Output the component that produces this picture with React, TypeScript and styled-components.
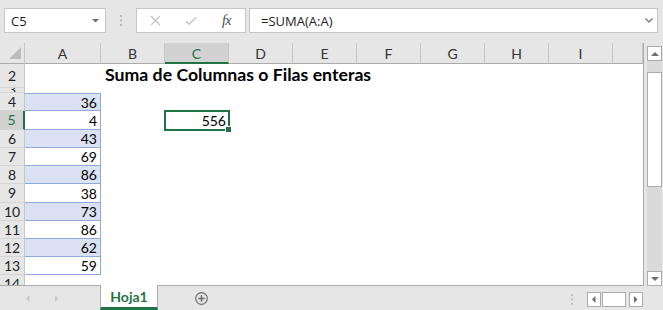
import React from 'react';
import styled, { createGlobalStyle } from 'styled-components';

const GREEN = '#217346';
const UI_FONT = `"Open Sans", "Noto Sans", sans-serif`;
const CELL_FONT = `Lato, "Liberation Sans", sans-serif`;

const GlobalStyle = createGlobalStyle`
  html, body {
    margin: 0;
    padding: 0;
    background: #e6e6e6;
  }
  body {
    width: 663px;
    height: 310px;
    overflow: hidden;
  }
`;

const Window = styled.div`
  width: 663px;
  height: 310px;
  display: flex;
  flex-direction: column;
  background: #e6e6e6;
  overflow: hidden;
`;

/* ---------- formula bar ---------- */

const Toolbar = styled.div`
  height: 43px;
  box-sizing: border-box;
  padding: 8px 5px 10px 4px;
  display: flex;
  align-items: stretch;
`;

const Box = styled.div`
  background: #fff;
  border: 1px solid #c6c6c6;
  box-sizing: border-box;
  display: flex;
  align-items: center;
`;

const NameBox = styled(Box)`
  width: 102px;
  padding: 0 6px 0 6px;
  justify-content: space-between;
  font: 13px ${UI_FONT};
  color: #222;
`;

const Splitter = styled.div`
  width: 30px;
  display: flex;
  align-items: center;
  justify-content: center;
`;

const FxBox = styled(Box)`
  width: 110px;
  padding: 0 13px;
  gap: 24px;
`;

const FxIcon = styled.div`
  width: 12px;
  display: flex;
  justify-content: center;
  align-items: center;
`;

const FxLabel = styled.span`
  font: italic 14px "Liberation Serif", serif;
  color: #4a4a4a;
  letter-spacing: -0.5px;
`;

const FormulaInput = styled(Box)`
  flex: 1;
  margin-left: 3px;
  padding: 0 4px 0 11px;
  justify-content: space-between;
  font: 13px ${UI_FONT};
  color: #222;
`;

/* ---------- sheet ---------- */

const Sheet = styled.div`
  height: 243px;
  display: flex;
`;

const GridFrame = styled.div`
  width: 644px;
  height: 243px;
  box-sizing: border-box;
  border-right: 1px solid #ababab;
  border-bottom: 1px solid #ababab;
  background: #fff;
  overflow: hidden;
  display: grid;
  grid-template-columns: 25px 76px repeat(8, 64px) 30px;
  grid-template-rows: 21px 24px 5px 18px 19px 18px 18px 18px 19px 18px 18px 18px 18px 18px;
  font-family: ${CELL_FONT};
`;

const Corner = styled.div`
  background: #e6e6e6;
  border-right: 1px solid #c6c6c6;
  border-bottom: 1px solid #ababab;
  box-sizing: border-box;
  display: flex;
  align-items: flex-end;
  justify-content: flex-end;
  padding: 0 3px 4px 0;
`;

const ColHeader = styled.div<{ $active?: boolean }>`
  background: ${({ $active }) => ($active ? '#d2d2d2' : '#e6e6e6')};
  color: ${({ $active }) => ($active ? GREEN : '#333')};
  border-right: 1px solid #c6c6c6;
  border-bottom: ${({ $active }) => ($active ? `2px solid ${GREEN}` : '1px solid #ababab')};
  box-sizing: border-box;
  display: flex;
  align-items: center;
  justify-content: center;
  font-size: 14px;
  padding-top: ${({ $active }) => ($active ? '1px' : '0')};
`;

const RowHeader = styled.div<{ $active?: boolean; $tiny?: boolean }>`
  background: ${({ $active }) => ($active ? '#d2d2d2' : '#e6e6e6')};
  color: ${({ $active }) => ($active ? GREEN : '#222')};
  border-right: ${({ $active }) => ($active ? `2px solid ${GREEN}` : '1px solid #c6c6c6')};
  border-bottom: 1px solid #d4d4d4;
  box-sizing: border-box;
  display: flex;
  align-items: center;
  justify-content: center;
  overflow: hidden;
  font-size: 14px;
  line-height: ${({ $tiny }) => ($tiny ? '4px' : '18px')};
`;

const Empty = styled.div``;

const TitleCell = styled.div`
  display: flex;
  align-items: flex-end;
  padding: 0 0 3px 4px;
  white-space: nowrap;
  font-weight: 700;
  font-size: 17.7px;
  color: #000;
`;

const TableCell = styled.div<{ $band: boolean; $first?: boolean }>`
  background: ${({ $band }) => ($band ? '#d9e1f2' : '#fff')};
  border-right: 1px solid #8ea9db;
  border-bottom: 1px solid #8ea9db;
  border-top: ${({ $first }) => ($first ? '1px solid #8ea9db' : 'none')};
  box-sizing: border-box;
  display: flex;
  align-items: center;
  justify-content: flex-end;
  padding-right: 3px;
  font-size: 14px;
  color: #000;
`;

const ValueCell = styled.div<{ $selected?: boolean }>`
  position: relative;
  display: flex;
  align-items: center;
  justify-content: flex-end;
  padding-right: 3px;
  font-size: 14px;
  color: #000;

  ${({ $selected }) =>
    $selected &&
    `
    &::before {
      content: '';
      position: absolute;
      left: -1px;
      top: -1px;
      right: -1px;
      bottom: -1px;
      border: 2px solid ${GREEN};
    }
    &::after {
      content: '';
      position: absolute;
      right: -3px;
      bottom: -3px;
      width: 5px;
      height: 5px;
      background: ${GREEN};
      border: 1px solid #fff;
    }
  `}
`;

/* ---------- vertical scrollbar ---------- */

const VScroll = styled.div`
  width: 15px;
  margin-left: 3px;
  padding-top: 3px;
  display: flex;
  flex-direction: column;
`;

const ScrollButton = styled.div<{ $w?: number; $h?: number }>`
  width: ${({ $w }) => $w ?? 15}px;
  height: ${({ $h }) => $h ?? 15}px;
  box-sizing: border-box;
  background: #fff;
  border: 1px solid #ababab;
  display: flex;
  align-items: center;
  justify-content: center;
  flex-shrink: 0;
`;

const VTrack = styled.div`
  flex: 1;
  background: #dadada;
  padding-top: 11px;
`;

const VThumb = styled.div`
  height: 115px;
  box-sizing: border-box;
  background: #fff;
  border: 1px solid #ababab;
`;

/* ---------- sheet tabs ---------- */

const TabBar = styled.div`
  flex: 1;
  display: flex;
  align-items: flex-start;
`;

const TabNav = styled.div`
  width: 100px;
  height: 24px;
  display: flex;
  align-items: center;
  padding-left: 26px;
  box-sizing: border-box;
  gap: 25px;
`;

const SheetTab = styled.div`
  position: relative;
  width: 58px;
  height: 25px;
  margin-top: -1px;
  box-sizing: border-box;
  background: #fff;
  border-left: 1px solid #ababab;
  border-right: 1px solid #ababab;
  border-bottom: 3px solid ${GREEN};
  display: flex;
  align-items: center;
  justify-content: center;
  font: 700 14px ${CELL_FONT};
  color: ${GREEN};
  padding-top: 1px;
`;

const AddSheet = styled.div`
  margin: 6px 0 0 37px;
  display: flex;
`;

const Spacer = styled.div`
  flex: 1;
`;

const HScroll = styled.div`
  display: flex;
  align-items: center;
  margin: 6px 20px 0 0;
`;

const HDots = styled.div`
  margin-right: 14px;
  display: flex;
`;

const HTrack = styled.div`
  width: 28px;
  height: 15px;
  padding: 0 3px 0 1px;
  box-sizing: border-box;
  display: flex;
`;

const HThumb = styled.div`
  flex: 1;
  box-sizing: border-box;
  background: #fff;
  border: 1px solid #ababab;
`;

const Dots = ({ color = '#b8b8b8' }: { color?: string }) => (
  <svg width="2" height="11" viewBox="0 0 2 11">
    <rect x="0" y="0" width="2" height="2" fill={color} />
    <rect x="0" y="4.5" width="2" height="2" fill={color} />
    <rect x="0" y="9" width="2" height="2" fill={color} />
  </svg>
);

const Triangle = ({ dir, color, size = 4 }: { dir: 'up' | 'down' | 'left' | 'right'; color: string; size?: number }) => {
  const s = size;
  const pts =
    dir === 'up'
      ? `0,${s} ${s},0 ${2 * s},${s}`
      : dir === 'down'
      ? `0,0 ${2 * s},0 ${s},${s}`
      : dir === 'left'
      ? `${s},0 ${s},${2 * s} 0,${s}`
      : `0,0 ${s},${s} 0,${2 * s}`;
  const horiz = dir === 'up' || dir === 'down';
  return (
    <svg width={horiz ? 2 * s : s} height={horiz ? s : 2 * s}>
      <polygon points={pts} fill={color} />
    </svg>
  );
};

const columns = ['A', 'B', 'C', 'D', 'E', 'F', 'G', 'H', 'I', ''];
const values = [36, 4, 43, 69, 86, 38, 73, 86, 62, 59];
const total = values.reduce((a, b) => a + b, 0);

const emptyCells = (key: string, n: number) =>
  Array.from({ length: n }, (_, i) => <Empty key={`${key}-${i}`} />);

export default function App() {
  return (
    <>
      <GlobalStyle />
      <Window>
        <Toolbar>
          <NameBox>
            <span>C5</span>
            <Triangle dir="down" color="#6d6d6d" size={3.5} />
          </NameBox>
          <Splitter>
            <Dots />
          </Splitter>
          <FxBox>
            <FxIcon>
              <svg width="11" height="11" viewBox="0 0 11 11">
                <path d="M1 1 L10 10 M10 1 L1 10" stroke="#c4c4c4" strokeWidth="1.3" />
              </svg>
            </FxIcon>
            <FxIcon>
              <svg width="13" height="10" viewBox="0 0 13 10">
                <path d="M1 5 L4.5 8.5 L12 1" stroke="#c4c4c4" strokeWidth="1.6" fill="none" />
              </svg>
            </FxIcon>
            <FxIcon>
              <FxLabel>fx</FxLabel>
            </FxIcon>
          </FxBox>
          <FormulaInput>
            <span>=SUMA(A:A)</span>
            <svg width="8" height="5" viewBox="0 0 8 5">
              <path d="M0.5 0.5 L4 4 L7.5 0.5" stroke="#7a7a7a" strokeWidth="1.4" fill="none" />
            </svg>
          </FormulaInput>
        </Toolbar>

        <Sheet>
          <GridFrame>
            <Corner>
              <svg width="12" height="12" viewBox="0 0 12 12">
                <polygon points="12,0 12,12 0,12" fill="#bdbdbd" />
              </svg>
            </Corner>
            {columns.map((c, i) => (
              <ColHeader key={`h${i}`} $active={c === 'C'}>
                {c}
              </ColHeader>
            ))}

            <RowHeader>2</RowHeader>
            <Empty />
            <TitleCell>Suma de Columnas o Filas enteras</TitleCell>
            {emptyCells('r2', 8)}

            <RowHeader $tiny>3</RowHeader>
            {emptyCells('r3', 10)}

            {values.map((v, i) => {
              const row = i + 4;
              return (
                <React.Fragment key={`r${row}`}>
                  <RowHeader $active={row === 5}>{row}</RowHeader>
                  <TableCell $band={i % 2 === 0} $first={i === 0}>
                    {v}
                  </TableCell>
                  <Empty />
                  {row === 5 ? <ValueCell $selected>{total}</ValueCell> : <Empty />}
                  {emptyCells(`r${row}`, 7)}
                </React.Fragment>
              );
            })}

            <RowHeader>14</RowHeader>
            {emptyCells('r14', 10)}
          </GridFrame>

          <VScroll>
            <ScrollButton>
              <Triangle dir="up" color="#6d6d6d" size={4} />
            </ScrollButton>
            <VTrack>
              <VThumb />
            </VTrack>
            <ScrollButton>
              <Triangle dir="down" color="#6d6d6d" size={4} />
            </ScrollButton>
          </VScroll>
        </Sheet>

        <TabBar>
          <TabNav>
            <Triangle dir="left" color="#c8c8c8" size={3.5} />
            <Triangle dir="right" color="#c8c8c8" size={3.5} />
          </TabNav>
          <SheetTab>Hoja1</SheetTab>
          <AddSheet>
            <svg width="13" height="13" viewBox="0 0 13 13">
              <circle cx="6.5" cy="6.5" r="5.8" stroke="#6d6d6d" strokeWidth="1.2" fill="none" />
              <path d="M6.5 3.3 V9.7 M3.3 6.5 H9.7" stroke="#6d6d6d" strokeWidth="1.5" />
            </svg>
          </AddSheet>
          <Spacer />
          <HScroll>
            <HDots>
              <Dots color="#c0c0c0" />
            </HDots>
            <ScrollButton $w={14}>
              <Triangle dir="left" color="#6d6d6d" size={3.5} />
            </ScrollButton>
            <HTrack>
              <HThumb />
            </HTrack>
            <ScrollButton $w={14}>
              <Triangle dir="right" color="#6d6d6d" size={3.5} />
            </ScrollButton>
          </HScroll>
        </TabBar>
      </Window>
    </>
  );
}
